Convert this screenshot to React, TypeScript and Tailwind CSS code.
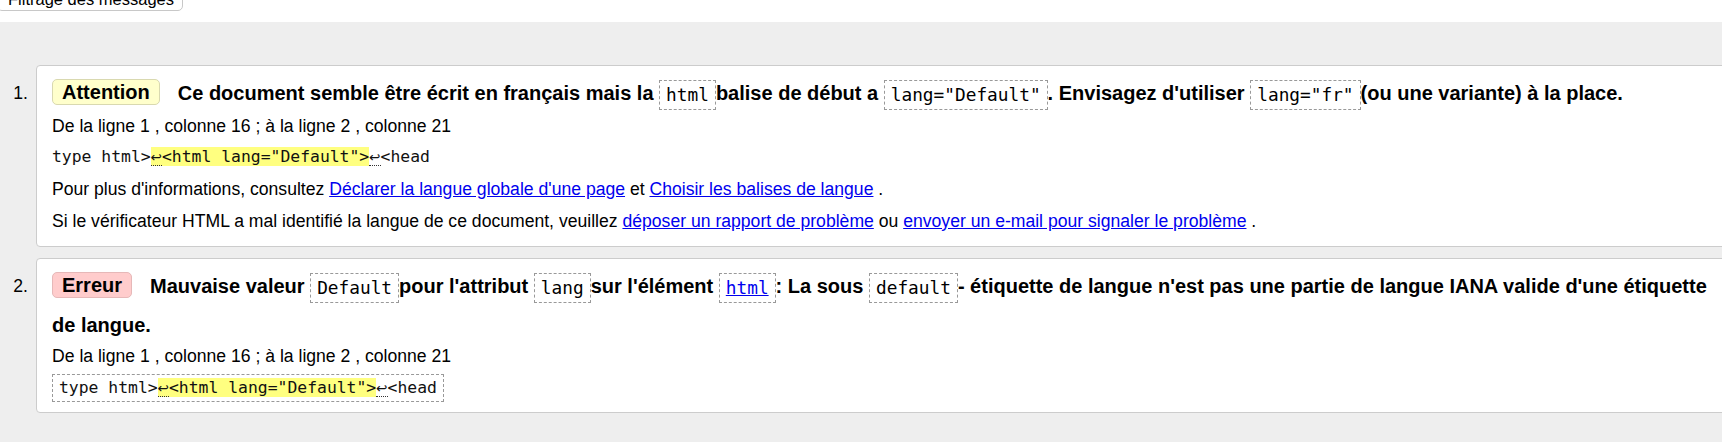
import React from "react";

function Badge({ kind, children }: { kind: "warn" | "error"; children: React.ReactNode }) {
  const cls =
    kind === "warn"
      ? "bg-[#ffffcc] border-[#d9d9b0]"
      : "bg-[#ffcccc] border-[#e6b8b8]";
  return (
    <span className={`inline-block border rounded-[5px] px-[9px] leading-[24px] mr-[18px] align-[1px] ${cls}`}>
      {children}
    </span>
  );
}

function Code({ children, link }: { children: React.ReactNode; link?: boolean }) {
  return (
    <span className="inline-block border border-dashed border-[#999999] px-[6px] leading-[28px] font-['DejaVu_Sans_Mono',monospace] font-normal text-[17.8px] align-[-1px]">
      {link ? <a className="text-[#0000ee] underline">{children}</a> : children}
    </span>
  );
}

function Ret() {
  return (
    <span className="border-b border-dotted border-[#333333] font-['DejaVu_Sans',sans-serif] text-[13.5px]">
      ↩
    </span>
  );
}

function Snippet() {
  return (
    <>
      type html&gt;
      <span className="bg-[#ffff80]">
        <Ret />
        {'<html lang="Default">'}
      </span>
      <Ret />
      &lt;head
    </>
  );
}

const A = ({ children }: { children: React.ReactNode }) => (
  <a className="text-[#0000ee] underline">{children}</a>
);

export default function App() {
  return (
    <div className="w-[1722px] h-[442px] overflow-hidden bg-[#eeeeee] text-black font-['Liberation_Sans',Arial,sans-serif]">
      <div className="h-[22px] bg-white flex items-start">
        <button className="h-[24px] -mt-[13px] -ml-[3px] w-[186px] pl-[10px] flex items-center border border-[#c8c8c8] rounded-[5px] bg-white text-[16.5px] leading-[22px] text-black">
          Filtrage des messages
        </button>
      </div>
      <ol className="pt-[43px] flex flex-col gap-[11px]">
        <li className="flex">
          <div className="w-[28px] shrink-0 text-right text-[17.6px] leading-[39px] pt-[9px]">1.</div>
          <div className="ml-[8px] -mr-[12px] flex-1 bg-white border border-[#cccccc] rounded-[4px] pl-[15px] pr-[17px] pt-[8px] pb-[14px]">
            <div className="text-[20px] font-bold leading-[39px]">
              <Badge kind="warn">Attention</Badge>
              Ce document semble être écrit en français mais la <Code>html</Code>balise de début a{" "}
              <Code>{'lang="Default"'}</Code>. Envisagez d'utiliser <Code>{'lang="fr"'}</Code>(ou une variante) à la place.
            </div>
            <div className="text-[17.6px] leading-[22px] mt-[2px]">
              De la ligne 1 , colonne 16 ; à la ligne 2 , colonne 21
            </div>
            <div className="font-['DejaVu_Sans_Mono',monospace] text-[16.4px] leading-[22px] mt-[9px] text-[#111111]">
              <Snippet />
            </div>
            <div className="text-[17.6px] leading-[22px] mt-[10px]">
              Pour plus d'informations, consultez <A>Déclarer la langue globale d'une page</A> et{" "}
              <A>Choisir les balises de langue</A> .
            </div>
            <div className="text-[17.6px] leading-[22px] mt-[10px]">
              Si le vérificateur HTML a mal identifié la langue de ce document, veuillez{" "}
              <A>déposer un rapport de problème</A> ou <A>envoyer un e-mail pour signaler le problème</A> .
            </div>
          </div>
        </li>
        <li className="flex">
          <div className="w-[28px] shrink-0 text-right text-[17.6px] leading-[39px] pt-[9px]">2.</div>
          <div className="ml-[8px] -mr-[12px] flex-1 bg-white border border-[#cccccc] rounded-[4px] pl-[15px] pr-[17px] pt-[8px] pb-[10px]">
            <div className="text-[20px] font-bold leading-[39px]">
              <Badge kind="error">Erreur</Badge>
              Mauvaise valeur <Code>Default</Code>pour l'attribut <Code>lang</Code>sur l'élément{" "}
              <Code link>html</Code>: La sous <Code>default</Code>- étiquette de langue n'est pas une partie de langue IANA
              valide d'une étiquette de langue.
            </div>
            <div className="text-[17.6px] leading-[22px]">
              De la ligne 1 , colonne 16 ; à la ligne 2 , colonne 21
            </div>
            <div className="mt-[7px] flex">
              <div className="border border-dashed border-[#999999] px-[6px] font-['DejaVu_Sans_Mono',monospace] text-[16.4px] leading-[26px] text-[#111111]">
                <Snippet />
              </div>
            </div>
          </div>
        </li>
      </ol>
    </div>
  );
}
